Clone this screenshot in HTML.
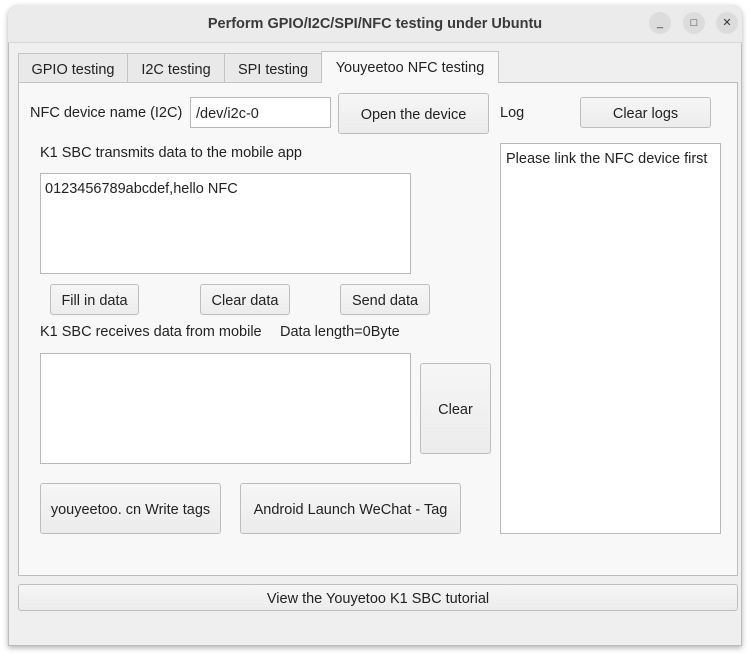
<!DOCTYPE html>
<html><head><style>
*{box-sizing:border-box;margin:0;padding:0}
body{width:750px;height:654px;background:#fff;font-family:"Liberation Sans",sans-serif;font-size:14px;color:#222;position:relative;overflow:hidden}
.a{position:absolute}
.win{left:8px;top:5px;width:734px;height:641px;background:#efefef;border:1px solid #bbb;border-radius:10px 10px 0 0;box-shadow:0 2px 6px rgba(0,0,0,.3)}
.title{left:8px;top:5px;width:734px;height:38px;background:#ebebeb;border-bottom:1px solid #d6d6d6;border-radius:10px 10px 0 0;text-align:center;line-height:38px;font-weight:bold;font-size:14.5px;color:#3a3a3a}
.circ{width:22px;height:22px;border-radius:50%;background:#dcdcdc;top:12px;text-align:center;line-height:22px;font-size:11px;color:#333}
.tab{top:53px;height:30px;border:1px solid #c4c4c4;background:#e9e9e9;line-height:32px;text-align:center;font-size:14.5px}
.panel{left:18px;top:82px;width:720px;height:494px;background:#f8f8f8;border:1px solid #bcbcbc}
.btn{border:1px solid #bdbdbd;border-radius:3px;background:linear-gradient(#f6f6f6,#ececec);text-align:center;font-size:14.5px}
.box{background:#fff;border:1px solid #b8b8b8}
.t{font-size:14.5px;white-space:nowrap}
</style></head><body>
<div class="a win"></div>
<div class="a title">Perform GPIO/I2C/SPI/NFC testing under Ubuntu</div>
<div class="a circ" style="left:649px">_</div>
<div class="a circ" style="left:683px">□</div>
<div class="a circ" style="left:716px">✕</div>
<div class="a panel"></div>
<div class="a tab" style="left:18px;width:110px">GPIO testing</div>
<div class="a tab" style="left:127px;width:98px">I2C testing</div>
<div class="a tab" style="left:224px;width:98px">SPI testing</div>
<div class="a tab" style="left:321px;top:51px;width:178px;height:32px;background:#f8f8f8;border-bottom:none">Youyeetoo NFC testing</div>
<div class="a t" style="left:30px;top:105px">NFC device name (I2C)</div>
<div class="a box" style="left:190px;top:97px;width:141px;height:31px;padding:7px 5px" ><span class="t">/dev/i2c-0</span></div>
<div class="a btn" style="left:338px;top:93px;width:151px;height:41px;line-height:42px">Open the device</div>
<div class="a t" style="left:500px;top:105px">Log</div>
<div class="a btn" style="left:580px;top:97px;width:131px;height:31px;line-height:32px">Clear logs</div>
<div class="a box" style="left:500px;top:143px;width:221px;height:391px;padding:6px 5px"><span class="t">Please link the NFC device first</span></div>
<div class="a t" style="left:40px;top:145px">K1 SBC transmits data to the mobile app</div>
<div class="a box" style="left:40px;top:173px;width:371px;height:101px;padding:6px 4px"><span class="t">0123456789abcdef,hello NFC</span></div>
<div class="a btn" style="left:50px;top:284px;width:89px;height:31px;line-height:32px">Fill in data</div>
<div class="a btn" style="left:200px;top:284px;width:90px;height:31px;line-height:32px">Clear data</div>
<div class="a btn" style="left:340px;top:284px;width:90px;height:31px;line-height:32px">Send data</div>
<div class="a t" style="left:40px;top:324px;width:222px;overflow:hidden">K1 SBC receives data from mobile</div>
<div class="a t" style="left:280px;top:324px">Data length=0Byte</div>
<div class="a box" style="left:40px;top:353px;width:371px;height:111px"></div>
<div class="a btn" style="left:420px;top:363px;width:71px;height:91px;line-height:92px">Clear</div>
<div class="a btn" style="left:40px;top:483px;width:181px;height:51px;line-height:52px">youyeetoo. cn Write tags</div>
<div class="a btn" style="left:240px;top:483px;width:221px;height:51px;line-height:52px">Android Launch WeChat - Tag</div>
<div class="a btn" style="left:18px;top:584px;width:720px;height:27px;line-height:28px">View the Youyetoo K1 SBC tutorial</div>
</body></html>
